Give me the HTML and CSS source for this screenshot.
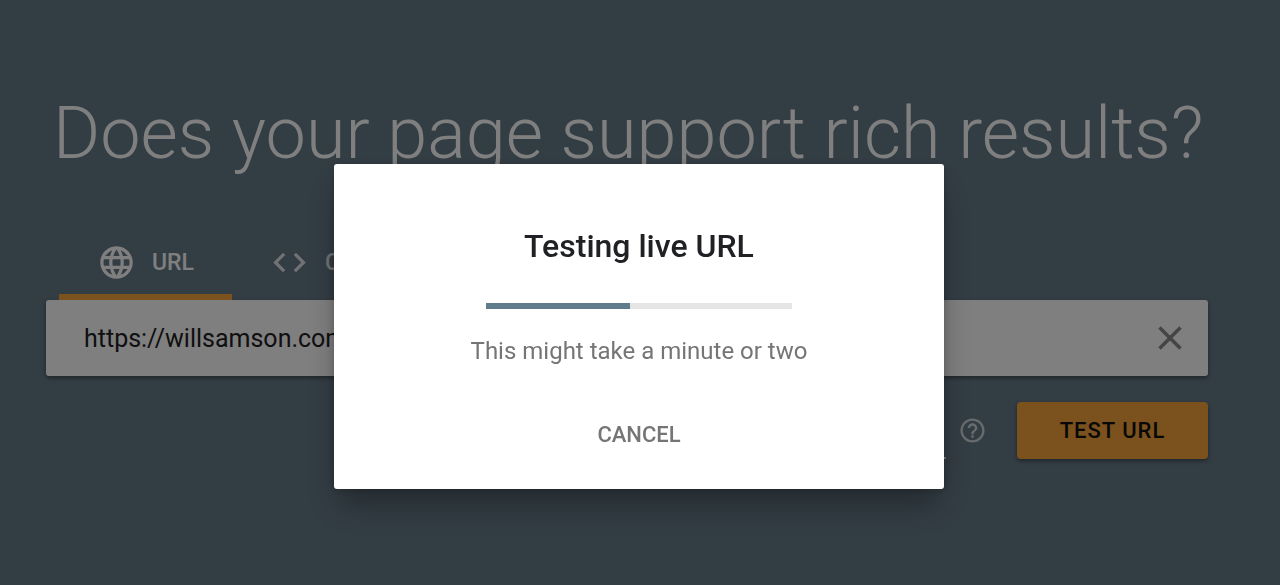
FILE: index.html
```
<!DOCTYPE html>
<html lang="en">
<head>
    <meta charset="utf-8">
    <title>Rich Results Test</title>
    <link rel="stylesheet" href="styles.css">
</head>
<body>
    <main class="page">
        <h1 class="headline">Does your page support rich results?</h1>

        <div class="tabs">
            <button type="button" class="tab tab-active">
                <svg class="tab-icon" viewBox="0 0 24 24" aria-hidden="true"><path d="M11.99 2C6.47 2 2 6.48 2 12s4.47 10 9.99 10C17.52 22 22 17.52 22 12S17.52 2 11.99 2zm6.93 6h-2.95a15.65 15.65 0 0 0-1.38-3.56A8.03 8.03 0 0 1 18.92 8zM12 4.04c.83 1.2 1.48 2.53 1.91 3.96h-3.82c.43-1.43 1.08-2.76 1.91-3.96zM4.26 14C4.1 13.36 4 12.69 4 12s.1-1.36.26-2h3.38c-.08.66-.14 1.32-.14 2s.06 1.34.14 2H4.26zm.82 2h2.95c.32 1.25.78 2.45 1.38 3.56A7.987 7.987 0 0 1 5.08 16zm2.95-8H5.08a7.987 7.987 0 0 1 4.33-3.56A15.65 15.65 0 0 0 8.03 8zM12 19.96c-.83-1.2-1.48-2.53-1.91-3.96h3.82c-.43 1.43-1.08 2.76-1.91 3.96zM14.34 14H9.66c-.09-.66-.16-1.32-.16-2s.07-1.35.16-2h4.68c.09.65.16 1.32.16 2s-.07 1.34-.16 2zm.25 5.56c.6-1.11 1.06-2.31 1.38-3.56h2.95a8.03 8.03 0 0 1-4.33 3.56zM16.36 14c.08-.66.14-1.32.14-2s-.06-1.34-.14-2h3.38c.16.64.26 1.31.26 2s-.1 1.36-.26 2h-3.38z"/></svg>
                <span>URL</span>
            </button>
            <button type="button" class="tab">
                <svg class="tab-icon" viewBox="0 0 24 24" aria-hidden="true"><path d="M9.4 16.6L4.8 12l4.6-4.6L8 6l-6 6 6 6 1.4-1.4zm5.2 0l4.6-4.6-4.6-4.6L16 6l6 6-6 6-1.4-1.4z"/></svg>
                <span>CODE</span>
            </button>
        </div>

        <div class="url-box">
            <input class="url-input" type="text" value="https://willsamson.com/" aria-label="URL to test">
            <button type="button" class="icon-button" aria-label="Clear">
                <svg class="clear-icon" viewBox="0 0 24 24" aria-hidden="true"><path d="M3 3l18 18M21 3L3 21"/></svg>
            </button>
        </div>

        <div class="actions">
            <select class="agent-select" aria-label="User agent">
                <option>Googlebot smartphone</option>
            </select>
            <button type="button" class="icon-button" aria-label="Help">
                <svg class="help-icon" viewBox="0 0 24 24" aria-hidden="true"><path d="M11 18h2v-2h-2v2zm1-16C6.48 2 2 6.48 2 12s4.48 10 10 10 10-4.48 10-10S17.52 2 12 2zm0 18c-4.41 0-8-3.59-8-8s3.59-8 8-8 8 3.59 8 8-3.59 8-8 8zm0-14c-2.21 0-4 1.79-4 4h2c0-1.1.9-2 2-2s2 .9 2 2c0 2-3 1.75-3 5h2c0-2.25 3-2.5 3-5 0-2.21-1.79-4-4-4z"/></svg>
            </button>
            <button type="button" class="test-button">TEST URL</button>
        </div>
    </main>

    <div class="overlay">
        <div class="dialog" role="dialog" aria-labelledby="dialogTitle">
            <h2 class="dialog-title" id="dialogTitle">Testing live URL</h2>
            <div class="progress" role="progressbar" aria-labelledby="dialogTitle">
                <div class="progress-bar" style="width: 47%"></div>
            </div>
            <p class="dialog-text">This might take a minute or two</p>
            <button type="button" class="cancel-button">CANCEL</button>
        </div>
    </div>
</body>
</html>
```
FILE: styles.css
```
* {
    box-sizing: border-box;
}
body {
    margin: 0;
    min-height: 100vh;
    background-color: #667b88;
    font-family: Roboto, sans-serif;
    color: #fff;
}
button {
    border: none;
    background: none;
    padding: 0;
    font-family: inherit;
    color: inherit;
    cursor: pointer;
}
svg {
    display: block;
    fill: currentColor;
}
.page {
    padding: 92px 72px 40px 46px;
}
.headline {
    margin: 0 0 49px 7px;
    font-size: 72px;
    line-height: 84px;
    font-weight: 300;
    white-space: nowrap;
}

/* Tabs */
.tabs {
    display: flex;
    margin-left: 13px;
}
.tab {
    display: flex;
    align-items: center;
    gap: 16px;
    height: 75px;
    padding: 6px 38px 0;
    border-bottom: 6px solid transparent;
    font-size: 23px;
    font-weight: 500;
    opacity: 0.8;
}
.tab-active {
    border-bottom-color: #f6a23a;
    opacity: 1;
}
.tab-icon {
    width: 39px;
    height: 39px;
}

/* URL field */
.url-box {
    display: flex;
    align-items: center;
    height: 76px;
    padding: 0 18px 0 38px;
    background: #fff;
    border-radius: 3px;
    box-shadow: 0 2px 4px rgba(0,0,0,0.4);
}
.url-input {
    flex: 1;
    min-width: 0;
    padding: 0;
    border: none;
    outline: none;
    background: none;
    font-family: inherit;
    font-size: 25px;
    color: #212121;
}
.icon-button {
    display: flex;
    align-items: center;
    justify-content: center;
    width: 40px;
    height: 40px;
}
.clear-icon {
    width: 28px;
    height: 28px;
    fill: none;
    stroke: #8a8a8a;
    stroke-width: 3;
}

/* Actions below the field */
.actions {
    display: flex;
    align-items: center;
    justify-content: flex-end;
    margin-top: 26px;
}
.agent-select {
    width: 280px;
    height: 57px;
    margin-right: 6px;
    border: none;
    border-bottom: 2px solid #fff;
    background: none;
    font-family: inherit;
    font-size: 23px;
    color: inherit;
    appearance: none;
}
.help-icon {
    width: 29px;
    height: 29px;
    opacity: 0.7;
}
.test-button {
    width: 191px;
    height: 57px;
    margin-left: 25px;
    background: #f6a23a;
    border-radius: 4px;
    box-shadow: 0 2px 4px rgba(0,0,0,0.4);
    font-size: 22px;
    font-weight: 500;
    letter-spacing: 1px;
    color: #111;
}

/* Dialog */
.overlay {
    position: fixed;
    inset: 0;
    display: flex;
    align-items: center;
    justify-content: center;
    padding: 68px 2px 0 0;
    background: rgba(0,0,0,0.5);
}
.dialog {
    display: flex;
    flex-direction: column;
    align-items: center;
    width: 610px;
    padding: 63px 24px 35px;
    background: #fff;
    border-radius: 3px;
    box-shadow: 0 20px 30px -4px rgba(0,0,0,0.3), 0 1px 8px rgba(0,0,0,0.2);
}
.dialog-title {
    margin: 0 0 38px;
    font-size: 32px;
    line-height: 38px;
    font-weight: 500;
    color: #202124;
}
.progress {
    width: 306px;
    height: 6px;
    background: #e5e5e5;
}
.progress-bar {
    height: 100%;
    background: #607d8b;
}
.dialog-text {
    margin: 26px 0 49px;
    font-size: 24px;
    line-height: 32px;
    color: #757575;
}
.cancel-button {
    padding: 0 12px;
    font-size: 22px;
    line-height: 38px;
    font-weight: 500;
    color: #757575;
}
```
